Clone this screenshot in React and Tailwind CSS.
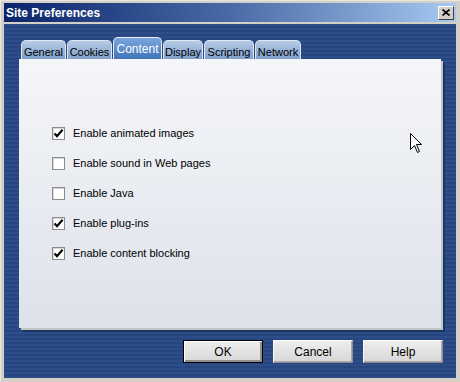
import { useState } from "react";

const FONT = "font-['Liberation_Sans',Arial,sans-serif]";

const TABS = [
  { name: "General", w: "w-[45px]" },
  { name: "Cookies", w: "w-[45px]" },
  { name: "Content", w: "w-[49px]" },
  { name: "Display", w: "w-[40px]" },
  { name: "Scripting", w: "w-[50px]" },
  { name: "Network", w: "w-[46px]" },
];

const OPTIONS = [
  { label: "Enable animated images", on: true },
  { label: "Enable sound in Web pages", on: false },
  { label: "Enable Java", on: false },
  { label: "Enable plug-ins", on: true },
  { label: "Enable content blocking", on: true },
];

function Check({ on }) {
  return (
    <span className="w-[13px] h-[13px] bg-white border border-[#8c8c8c] shadow-[inset_1px_1px_0_#d8d8d8] flex items-center justify-center">
      {on && (
        <svg width="11" height="11" viewBox="0 0 11 11">
          <path d="M1.5 5.5 L4 8.2 L9.6 1.8" fill="none" stroke="#000" strokeWidth="2.2" />
        </svg>
      )}
    </span>
  );
}

function Button({ children, isDefault }) {
  return (
    <button
      className={
        "w-[80px] h-[23px] text-[12px] text-black bg-linear-to-b from-[#eeeeee] to-[#d7d7d9] " +
        (isDefault
          ? "border border-black shadow-[inset_1px_1px_0_#fff,inset_-2px_-2px_0_#8e8e8e]"
          : "border border-[#fafafa] border-r-[#8e8e8e] border-b-[#8e8e8e] shadow-[inset_-1px_-1px_0_#a8a8a8]")
      }
    >
      {children}
    </button>
  );
}

export default function App() {
  const [tab] = useState("Content");

  return (
    <div className={`w-[460px] h-[382px] bg-[#d4d0c8] border-l border-t border-[#e8e6e0] pl-[3px] pt-[2px] pr-[4px] pb-[4px] flex flex-col ${FONT}`}>
      <div className="h-[19px] bg-linear-to-r from-[#0a246a] via-[#4a6aa6] to-[#a6caf0] flex items-center justify-between pl-[2px] pr-[2px]">
        <span className="text-white font-bold text-[12px]">Site Preferences</span>
        <span className="w-[16px] h-[14px] bg-[#d4d0c8] border border-white border-r-[#404040] border-b-[#404040] flex items-center justify-center">
          <svg width="8" height="7" viewBox="0 0 8 7">
            <path d="M0.5 0.5 L7.5 6.5 M7.5 0.5 L0.5 6.5" stroke="#000" strokeWidth="1.6" />
          </svg>
        </span>
      </div>

      <div className="relative flex-1 mt-[2px] bg-[repeating-linear-gradient(180deg,#2c4d87_0px,#2c4d87_2px,#274680_2px,#274680_4px)] pl-[15px] pr-[13px] pt-[13px] flex flex-col">
        <div className="flex items-end h-[22px] pl-[2px] gap-[1px]">
          {TABS.map((t) => {
            const active = t.name === tab;
            return (
              <div
                key={t.name}
                className={
                  t.w +
                  " text-center rounded-t-[5px] text-[11px] border border-b-0 " +
                  (active
                    ? "h-[22px] bg-linear-to-b from-[#7aa6de] to-[#3f74b8] text-white text-[12px] border-[#e8eef8] pt-[2px]"
                    : "h-[19px] bg-linear-to-b from-[#b6cbe6] to-[#7f9fcb] text-black border-[#dfe7f2] pt-[3px]")
                }
              >
                {t.name}
              </div>
            );
          })}
        </div>

        <div className="w-[422px] h-[269px] bg-linear-to-b from-[#f5f6f9] to-[#dde2ea] shadow-[2px_2px_0_#c4c4c4,4px_4px_0_#1d3563] pl-[33px] pt-[68px] flex flex-col gap-[17px]">
          {OPTIONS.map((o) => (
            <label key={o.label} className="flex items-center gap-[8px] h-[13px] text-[11px] text-black">
              <Check on={o.on} />
              <span>{o.label}</span>
            </label>
          ))}
        </div>

        <div className="flex justify-end gap-[10px] mt-[12px]">
          <Button isDefault>OK</Button>
          <Button>Cancel</Button>
          <Button>Help</Button>
        </div>

        <svg className="absolute left-[406px] top-[109px]" width="13" height="21" viewBox="0 0 13 21">
          <path d="M0.5 0.5 L0.5 16.5 L4.5 12.5 L7.5 19.5 L9.5 18.5 L6.5 11.5 L11.5 11.5 Z" fill="#fff" stroke="#000" strokeWidth="1" />
        </svg>
      </div>
    </div>
  );
}
